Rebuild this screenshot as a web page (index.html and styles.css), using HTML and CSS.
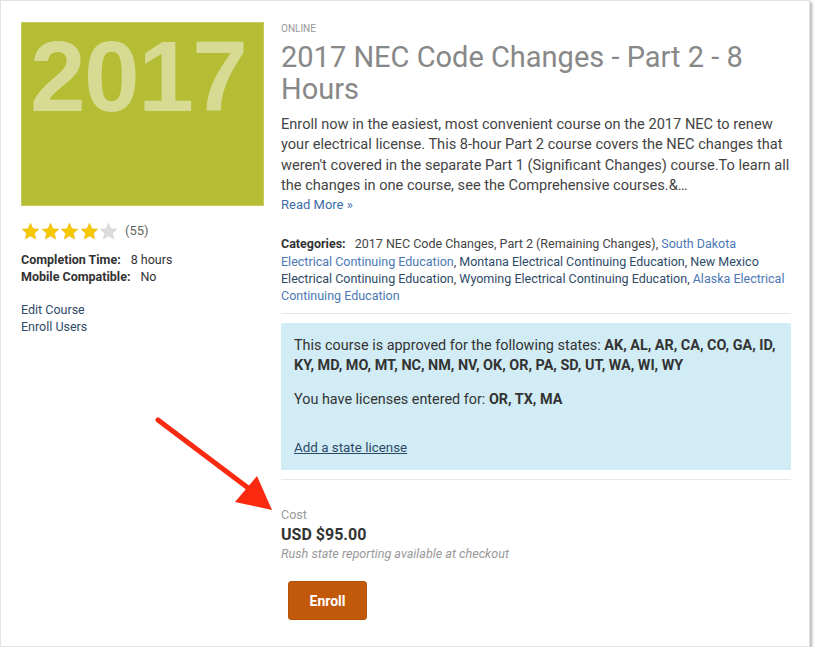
FILE: index.html
```html
<!DOCTYPE html>
<html lang="en">
<head>
<meta charset="utf-8">
<title>2017 NEC Code Changes - Part 2 - 8 Hours</title>
<link rel="stylesheet" href="styles.css">
</head>
<body>
<div class="card">
  <aside class="side">
    <div class="thumb"><span class="thumb-year">2017</span></div>
    <div class="rating">
      <span class="stars">
        <svg class="star on" viewBox="0 0 24 24"><path d="M12 1.5l3.1 6.9 7.4.7-5.6 5 1.7 7.4L12 17.6l-6.6 3.9 1.7-7.4-5.6-5 7.4-.7z"/></svg>
        <svg class="star on" viewBox="0 0 24 24"><path d="M12 1.5l3.1 6.9 7.4.7-5.6 5 1.7 7.4L12 17.6l-6.6 3.9 1.7-7.4-5.6-5 7.4-.7z"/></svg>
        <svg class="star on" viewBox="0 0 24 24"><path d="M12 1.5l3.1 6.9 7.4.7-5.6 5 1.7 7.4L12 17.6l-6.6 3.9 1.7-7.4-5.6-5 7.4-.7z"/></svg>
        <svg class="star on" viewBox="0 0 24 24"><path d="M12 1.5l3.1 6.9 7.4.7-5.6 5 1.7 7.4L12 17.6l-6.6 3.9 1.7-7.4-5.6-5 7.4-.7z"/></svg>
        <svg class="star off" viewBox="0 0 24 24"><path d="M12 1.5l3.1 6.9 7.4.7-5.6 5 1.7 7.4L12 17.6l-6.6 3.9 1.7-7.4-5.6-5 7.4-.7z"/></svg>
      </span>
      <span class="rating-count">(55)</span>
    </div>
    <div class="meta">
      <div class="meta-row"><b class="meta-label">Completion Time:</b><span class="meta-value">8 hours</span></div>
      <div class="meta-row"><b class="meta-label">Mobile Compatible:</b><span class="meta-value">No</span></div>
    </div>
    <nav class="admin-links">
      <a href="#">Edit Course</a>
      <a href="#">Enroll Users</a>
    </nav>
  </aside>

  <main class="main">
    <div class="type">ONLINE</div>
    <h1 class="title">2017 NEC Code Changes - Part 2 - 8 Hours</h1>
    <p class="desc">Enroll now in the easiest, most convenient course on the 2017 NEC to renew your electrical license. This 8-hour Part 2 course covers the NEC changes that weren't covered in the separate Part 1 (Significant Changes) course.To learn all the changes in one course, see the Comprehensive courses.&amp;…</p>
    <a class="read-more" href="#">Read More »</a>

    <div class="categories">
      <b class="cat-label">Categories:</b>
      <a class="cat dark-gray" href="#">2017 NEC Code Changes, Part 2 (Remaining Changes)</a>, <a class="cat blue" href="#">South Dakota Electrical Continuing Education</a>, <a class="cat navy" href="#">Montana Electrical Continuing Education</a>, <a class="cat navy" href="#">New Mexico Electrical Continuing Education</a>, <a class="cat navy" href="#">Wyoming Electrical Continuing Education</a>, <a class="cat blue" href="#">Alaska Electrical Continuing Education</a>
    </div>

    <hr class="rule">

    <div class="states">
      <p>This course is approved for the following states: <b>AK, AL, AR, CA, CO, GA, ID, KY, MD, MO, MT, NC, NM, NV, OK, OR, PA, SD, UT, WA, WI, WY</b></p>
      <p>You have licenses entered for: <b>OR, TX, MA</b></p>
      <a class="add-license" href="#">Add a state license</a>
    </div>

    <hr class="rule">

    <div class="cost">
      <div class="cost-label">Cost</div>
      <div class="cost-price">USD $95.00</div>
      <div class="cost-note">Rush state reporting available at checkout</div>
    </div>

    <button class="enroll" type="button">Enroll</button>
  </main>

  <svg class="arrow" width="140" height="110" viewBox="0 0 140 110">
    <line x1="2" y1="3" x2="104" y2="80" stroke="#f92a10" stroke-width="5" stroke-linecap="round"/>
    <polygon points="79,85 101,59 116,93" fill="#f92a10"/>
  </svg>
</div>
</body>
</html>
```

FILE: styles.css
```css
* { box-sizing: border-box; }

html, body {
  margin: 0;
  padding: 0;
  background: #ffffff;
}

body {
  font-family: Roboto, "Liberation Sans", Arial, sans-serif;
  color: #333;
  font-size: 14px;
  line-height: 1.42857;
}

a { text-decoration: none; }

.card {
  position: relative;
  width: 810px;
  height: 647px;
  background: #fff;
  border: 1px solid #e2e2e2;
  box-shadow: 2px 2px 3px rgba(0, 0, 0, 0.3);
  padding: 21px 20px 0 20px;
  display: flex;
  gap: 17px;
}

/* ---------- left column ---------- */
.side {
  width: 243px;
  flex: none;
}

.thumb {
  width: 243px;
  height: 184px;
  background: #b5bd34;
  border: 1px solid #c4ca5c;
  padding: 3px 0 0 8px;
}

.thumb-year {
  display: block;
  font-family: "Liberation Sans", Arial, sans-serif;
  font-weight: 700;
  font-size: 100px;
  line-height: 100px;
  letter-spacing: -1.5px;
  color: #d6da92;
}

.rating {
  display: flex;
  align-items: center;
  margin-top: 16px;
  height: 18px;
}

.stars {
  display: flex;
  gap: 0.5px;
}

.star {
  width: 19px;
  height: 19px;
}
.star.on path { fill: #f7c800; stroke: #e3ac00; stroke-width: 0.6; }
.star.off path { fill: #dcdcdc; stroke: #cfcfcf; stroke-width: 0.6; }

.rating-count {
  margin-left: 7px;
  font-size: 13px;
  color: #666;
}

.meta {
  margin-top: 11px;
  font-size: 12.5px;
  line-height: 17px;
  color: #333;
}

.meta-label { font-weight: 700; }
.meta-value { margin-left: 10px; }

.admin-links {
  margin-top: 16px;
  display: flex;
  flex-direction: column;
  font-size: 12.5px;
  line-height: 17px;
}
.admin-links a { color: #2f4a68; }

/* ---------- main column ---------- */
.main {
  width: 510px;
  flex: none;
}

.type {
  font-size: 10px;
  line-height: 14px;
  color: #999;
  text-transform: uppercase;
}

.title {
  margin: 6px 0 0 0;
  font-size: 29px;
  line-height: 1.1;
  font-weight: 400;
  color: #888;
}

.desc {
  margin: 8px 0 0 0;
  font-size: 14.6px;
  line-height: 20.4px;
  color: #444;
}

.read-more {
  display: inline-block;
  margin-top: 1px;
  font-size: 13px;
  line-height: 17px;
  color: #3d6ea8;
}

.categories {
  width: 508px;
  margin-top: 20px;
  font-size: 12.5px;
  line-height: 17.2px;
  color: #444;
}
.cat-label { color: #333; margin-right: 6px; }
.cat.dark-gray { color: #444; }
.cat.blue { color: #4b78b4; }
.cat.navy { color: #2e4a66; }

.rule {
  margin: 9px 0 0 0;
  border: 0;
  border-top: 1px solid #e6e6e6;
  height: 0;
}

.states {
  margin: 9px 0 8px 0;
  background: #d1ecf5;
  padding: 13px 12px 12px 13px;
  color: #333;
  font-size: 14.4px;
  line-height: 20px;
}
.states p { margin: 0 0 14px 0; }
.states b { color: #333; }
.add-license {
  display: inline-block;
  margin-top: 14px;
  color: #2c4a68;
  font-size: 13.4px;
  text-decoration: underline;
}

.cost { margin-top: 26px; }
.cost-label {
  font-size: 12.5px;
  line-height: 17px;
  color: #999;
}
.cost-price {
  font-size: 16px;
  line-height: 21px;
  margin-top: 1px;
  font-weight: 700;
  color: #333;
}
.cost-note {
  font-size: 12.6px;
  line-height: 17px;
  font-style: italic;
  color: #999;
}

.enroll {
  display: block;
  margin: 19px 0 0 7px;
  width: 79px;
  height: 39px;
  border: 1px solid #b3520a;
  border-radius: 3px;
  background: #c2580a;
  color: #fff;
  font-family: Roboto, "Liberation Sans", Arial, sans-serif;
  font-size: 14px;
  font-weight: 700;
  padding: 0;
}

/* annotation overlay */
.arrow {
  position: absolute;
  left: 155px;
  top: 416px;
  overflow: visible;
}
```
